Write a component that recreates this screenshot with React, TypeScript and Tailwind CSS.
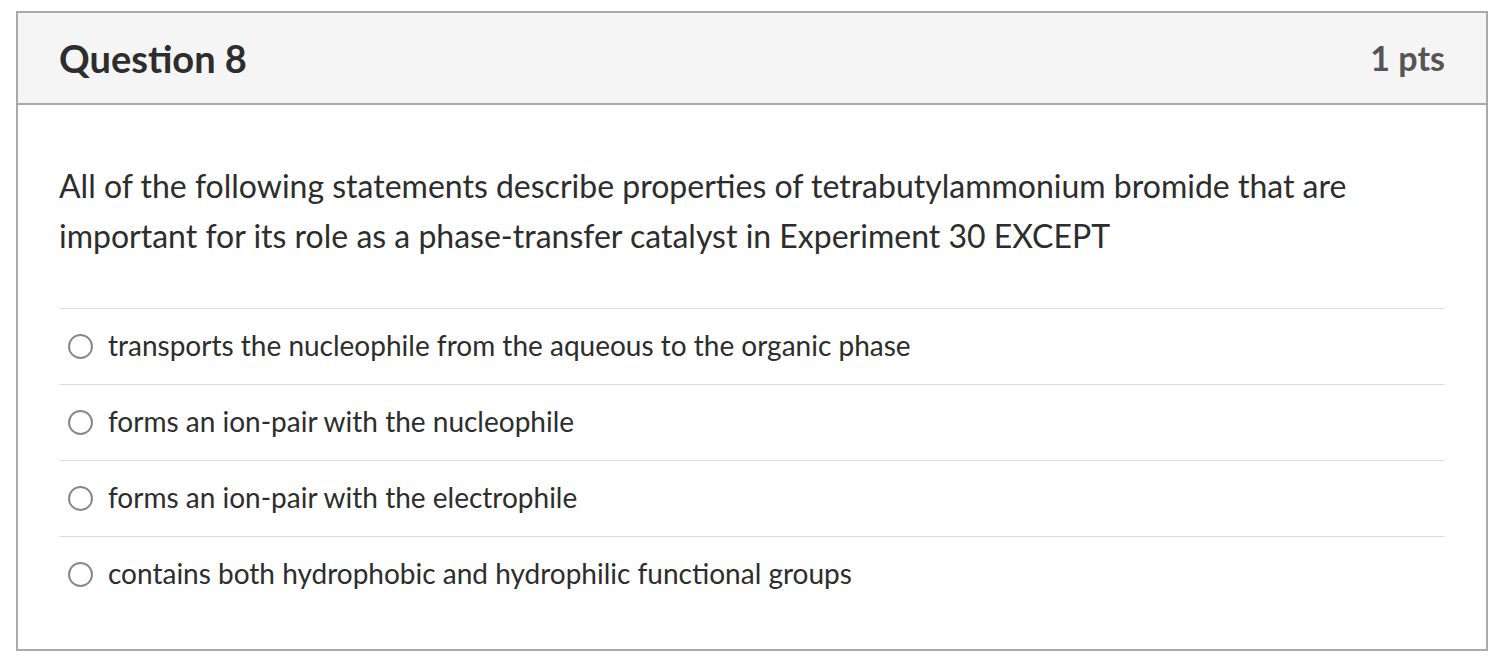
const answers = [
  "transports the nucleophile from the aqueous to the organic phase",
  "forms an ion-pair with the nucleophile",
  "forms an ion-pair with the electrophile",
  "contains both hydrophobic and hydrophilic functional groups",
];

export default function App() {
  return (
    <div className="min-h-screen bg-white pl-4 pr-2 pt-[11px] font-['Lato',sans-serif] text-[#2d2d2d]">
      <div className="w-[1472px] border-2 border-[#aaaaaa]">
        {/* Header */}
        <div className="flex h-[92px] items-center justify-between border-b-2 border-[#aaaaaa] bg-[#f5f5f5] px-[41px]">
          <h2 className="text-[38px] font-bold leading-none text-[#2d2d2d]">Question 8</h2>
          <span className="text-[34px] font-bold leading-none text-[#555]">1 pts</span>
        </div>

        {/* Body */}
        <div className="px-[41px] pb-[37px] pt-[56px]">
          <p className="text-[32px] leading-[50px]">
            All of the following statements describe properties of tetrabutylammonium bromide that are
            important for its role as a phase-transfer catalyst in Experiment 30 EXCEPT
          </p>

          <div className="mt-[47px]">
            {answers.map((a, i) => (
              <div
                key={i}
                className="flex h-[76px] items-center gap-[15px] border-t border-[#dddddd] pl-[9px]"
              >
                <span className="h-[25px] w-[25px] shrink-0 rounded-full border-2 border-[#888] bg-white" />
                <span className="pb-1 text-[28px] leading-none">{a}</span>
              </div>
            ))}
          </div>
        </div>
      </div>
    </div>
  );
}
